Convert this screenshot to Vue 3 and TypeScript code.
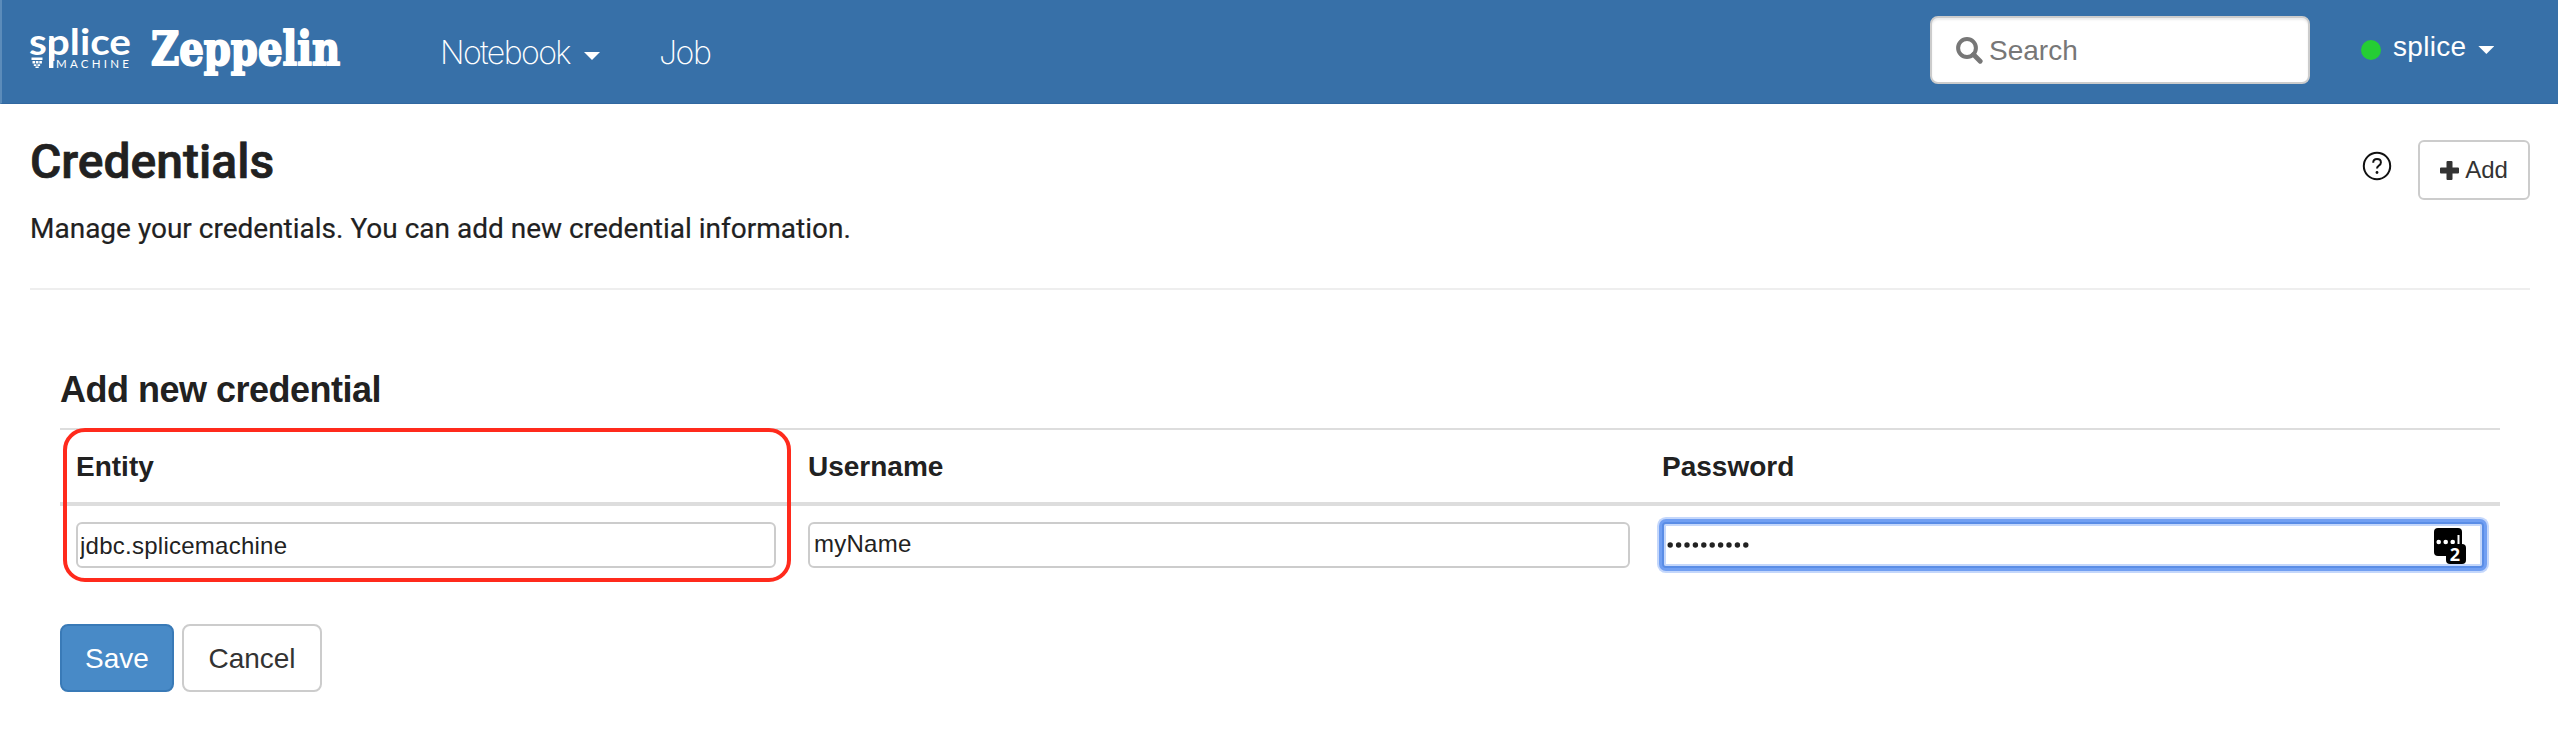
<script setup lang="ts">
import { ref } from 'vue'

const search = ref('')
const entity = ref('jdbc.splicemachine')
const username = ref('myName')
const password = ref('••••••••••')
</script>

<template>
  <div class="page">
    <header class="navbar">
      <svg class="logo" width="320" height="104" viewBox="0 0 320 104">
        <text class="splice" x="-1" y="54.500" textLength="102" lengthAdjust="spacingAndGlyphs">splice</text>
        <rect x="19" y="40" width="4.400" height="28" fill="#fff" />
        <text class="machine" x="26" y="68" textLength="73" lengthAdjust="spacing">MACHINE</text>
        <path d="M1.500 57.500h11v2.500H1.500zM2.500 61h2.600v2.500H2.500zM5.900 61h2.600v2.500H5.900zM9.300 61h2.600v2.500H9.300zM3.800 64.300h2.600v1.700H3.800zM7.500 64.300h2.600v1.700H7.500zM5.500 66.500h3.200v1.500H5.500z" fill="#fff" />
        <text class="zeppelin" x="121" y="65" textLength="189" lengthAdjust="spacingAndGlyphs">Zeppelin</text>
      </svg>
      <nav>
        <a class="notebook">Notebook</a>
        <i class="caret"></i>
        <a class="job">Job</a>
      </nav>
      <label class="search">
        <svg width="27" height="27" viewBox="0 0 27 27">
          <circle cx="11" cy="11" r="8.900" fill="none" stroke="#777" stroke-width="4" />
          <path d="M17.500 17.500l6.700 6.700" stroke="#777" stroke-width="4.800" stroke-linecap="round" />
        </svg>
        <input v-model="search" placeholder="Search" />
      </label>
      <div class="user">
        <i class="dot"></i>
        <span>splice</span>
        <i class="caret small"></i>
      </div>
    </header>

    <section class="heading">
      <div>
        <h1>Credentials</h1>
        <p>Manage your credentials. You can add new credential information.</p>
      </div>
      <div class="actions">
        <svg class="help" width="30" height="30" viewBox="0 0 30 30">
          <circle cx="15" cy="15" r="13.200" fill="none" stroke="#111" stroke-width="2" />
          <path d="M11.200 11.700C11.200 9.300 12.800 8 15 8c2.300 0 3.900 1.400 3.900 3.400 0 3.200-3.900 3-3.900 6.200" fill="none" stroke="#111" stroke-width="2" />
          <circle cx="15" cy="21.500" r="1.400" fill="#111" />
        </svg>
        <button class="btn add">
          <svg width="19" height="19" viewBox="0 0 19 19">
            <path d="M7.500 0h4a1 1 0 0 1 1 1v5.500H18a1 1 0 0 1 1 1v4a1 1 0 0 1-1 1h-5.500V18a1 1 0 0 1-1 1h-4a1 1 0 0 1-1-1v-5.500H1a1 1 0 0 1-1-1v-4a1 1 0 0 1 1-1h5.500V1a1 1 0 0 1 1-1z" fill="#333" />
          </svg>
          <span>Add</span>
        </button>
      </div>
    </section>

    <main>
      <h2>Add new credential</h2>
      <div class="table">
        <div class="row head">
          <div>Entity</div>
          <div>Username</div>
          <div>Password</div>
        </div>
        <div class="row body">
          <div><input v-model="entity" class="field entity" /></div>
          <div><input v-model="username" class="field username" /></div>
          <div class="secret">
            <div class="field focused">
              <svg width="86" height="8" viewBox="0 0 86 8" role="img">
                <circle v-for="(_, i) in password" :key="i" :cx="3.2 + i * 8.4" cy="4" r="2.700" fill="#222" />
              </svg>
            </div>
            <svg class="manager" width="32" height="36" viewBox="0 0 32 36">
              <rect width="28" height="28" rx="4" />
              <circle cx="4.700" cy="14" r="2.300" fill="#fff" />
              <circle cx="11.700" cy="14" r="2.300" fill="#fff" />
              <circle cx="18.700" cy="14" r="2.300" fill="#fff" />
              <path d="M24.500 7v9" stroke="#fff" stroke-width="2" />
              <rect x="12" y="16" width="20" height="20" rx="4" />
              <text x="21" y="33">2</text>
            </svg>
          </div>
        </div>
        <div class="highlight"></div>
      </div>
      <div class="buttons">
        <button class="btn save">Save</button>
        <button class="btn cancel">Cancel</button>
      </div>
    </main>
  </div>
</template>

<style>
body {
  margin: 0;
  background: #fff;
}
</style>

<style scoped>
* {
  box-sizing: border-box;
}
.page {
  width: 2558px;
  height: 750px;
  overflow: hidden;
  background: #fff;
  color: #212121;
  font-family: "Liberation Sans", Arial, sans-serif;
}
.navbar {
  display: flex;
  height: 104px;
  padding-left: 28px;
  background: #3770a8;
  border-left: 2px solid #5c8cba;
  border-bottom: 1px solid #3168a0;
  color: #fff;
}
.logo {
  flex: none;
  overflow: visible;
}
.logo text {
  fill: #fff;
}
.logo .splice {
  font: 700 36px Lato, sans-serif;
}
.logo .machine {
  font: 400 11.500px Lato, sans-serif;
}
.logo .zeppelin {
  font: 700 46px "DejaVu Serif", serif;
  stroke: #fff;
  stroke-width: 2px;
  stroke-linejoin: round;
}
nav {
  display: flex;
  width: 1580px;
  padding-left: 90px;
  font: 200 32px/38px Inter, sans-serif;
  padding-top: 34px;
}
.notebook {
  width: 144px;
  letter-spacing: -1.600px;
}
.job {
  margin-left: 59px;
  letter-spacing: -1.400px;
}
.caret {
  width: 16px;
  height: 8px;
  margin-top: 18px;
  background: #fff;
  clip-path: polygon(0 0, 100% 0, 50% 100%);
}
.search {
  display: flex;
  align-items: center;
  width: 380px;
  height: 68px;
  margin-top: 16px;
  padding-left: 24px;
  background: #fff;
  border: 2px solid #ccc;
  border-radius: 8px;
  box-shadow: inset 0 2px 2px rgba(0, 0, 0, 0.075);
}
.search input {
  width: 300px;
  margin-left: 6px;
  padding: 2px 0 0;
  border: 0;
  outline: 0;
  background: transparent;
  font: 28px "Liberation Sans", Arial, sans-serif;
}
.search input::placeholder {
  color: #777;
  opacity: 1;
}
.user {
  display: flex;
  margin-left: 51px;
  padding-top: 30px;
  font-size: 28px;
  line-height: 34px;
  letter-spacing: 0.300px;
}
.dot {
  width: 20px;
  height: 20px;
  margin: 10px 12px 0 0;
  border-radius: 50%;
  background: #25cd34;
}
.small {
  margin: 16px 0 0 12px;
}
.heading {
  display: flex;
  justify-content: space-between;
  height: 186px;
  margin: 0 28px 0 30px;
  border-bottom: 2px solid #eee;
}
h1,
h2,
p {
  margin: 0;
}
h1 {
  padding-top: 30px;
  font: 500 48px/56px Roboto, sans-serif;
  -webkit-text-stroke: 0.700px #212121;
}
p {
  margin-top: 19px;
  font: 400 28px/40px Roboto, sans-serif;
  -webkit-text-stroke: 0.200px #212121;
}
.actions {
  display: flex;
  align-items: flex-start;
  padding-top: 36px;
}
.help {
  margin: 11px 26px 0 0;
}
.btn {
  display: flex;
  align-items: center;
  justify-content: center;
  padding: 0;
  background: #fff;
  border: 2px solid #ccc;
  border-radius: 8px;
  color: #333;
  font: 28px "Liberation Sans", Arial, sans-serif;
}
.add {
  width: 112px;
  height: 60px;
  gap: 6px;
  border-radius: 6px;
  font-size: 24px;
}
main {
  padding: 79px 58px 0 60px;
}
h2 {
  height: 59px;
  font-size: 36px;
  line-height: 42px;
  letter-spacing: -0.500px;
}
.table {
  position: relative;
  border-top: 2px solid #ddd;
}
.row {
  display: grid;
  grid-template-columns: 732px 854px 854px;
}
.row > div {
  padding: 0 16px;
}
.head {
  height: 76px;
  border-bottom: 4px solid #ddd;
  font-size: 28px;
  font-weight: 700;
  line-height: 73px;
}
.body > div {
  padding-top: 16px;
}
.field {
  display: block;
  width: 100%;
  height: 46px;
  border: 2px solid #ccc;
  border-radius: 6px;
  outline: 0;
  background: #fff;
  color: #222;
  font: 24px "Liberation Sans", Arial, sans-serif;
  letter-spacing: 0.250px;
}
.entity {
  padding: 1px 2px 0;
}
.username {
  padding: 0 4px 2px;
}
.secret {
  position: relative;
}
.focused {
  display: flex;
  align-items: center;
  padding-left: 3px;
  border-color: #5a8de6;
  border-radius: 4px;
  box-shadow: 0 0 0 3px #719ff2, 0 0 0 5px #c4d7fb, inset 0 0 0 2px #c4d7fb;
}
.manager {
  position: absolute;
  top: 22px;
  right: 34px;
}
.manager text {
  fill: #fff;
  font: 700 18px "Open Sans", sans-serif;
  text-anchor: middle;
}
.highlight {
  position: absolute;
  left: 3px;
  top: -2px;
  width: 728px;
  height: 154px;
  border: 4px solid #ff2a1c;
  border-radius: 22px;
}
.buttons {
  display: flex;
  gap: 8px;
  margin-top: 56px;
}
.save,
.cancel {
  height: 68px;
  padding-top: 2px;
}
.save {
  width: 114px;
  background: #488ac7;
  border-color: #397ab7;
  color: #fff;
}
.cancel {
  width: 140px;
}
</style>
